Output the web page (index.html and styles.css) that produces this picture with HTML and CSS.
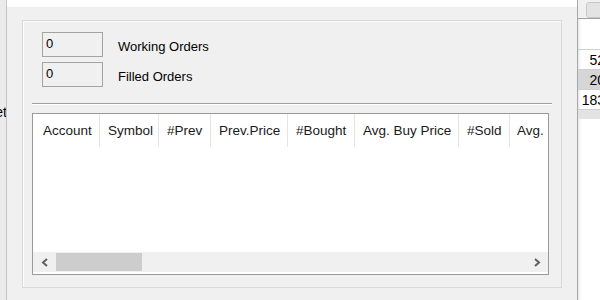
FILE: index.html
```html
<!DOCTYPE html>
<html>
<head>
    <title>Orders</title>
    <link rel="stylesheet" href="styles.css">
</head>
<body>

<div class="screen">
    <!-- window behind the dialog, left side -->
    <div class="behind-left">
        <span class="cut-text">Set</span>
    </div>

    <div class="dialog">
        <div class="titlebar"></div>
        <div class="dialog-body">
            <div class="panel">
                <div class="counters">
                    <div class="counter">
                        <div class="count-box">0</div>
                        <span class="count-label">Working Orders</span>
                    </div>
                    <div class="counter">
                        <div class="count-box">0</div>
                        <span class="count-label">Filled Orders</span>
                    </div>
                </div>

                <div class="separator"></div>

                <div class="listview">
                    <div class="list-header">
                        <div class="col col-account">Account</div>
                        <div class="col col-symbol">Symbol</div>
                        <div class="col col-prev">#Prev</div>
                        <div class="col col-prevprice">Prev.Price</div>
                        <div class="col col-bought">#Bought</div>
                        <div class="col col-buyprice">Avg. Buy Price</div>
                        <div class="col col-sold">#Sold</div>
                        <div class="col col-sellprice">Avg. Sell Price</div>
                    </div>
                    <div class="list-body">
                        <!-- no orders yet -->
                    </div>
                    <div class="hscroll">
                        <div class="scroll-btn">
                            <svg width="8" height="9" viewBox="0 0 8 9"><path d="M6 1 L2 4.5 L6 8" fill="none" stroke="#606060" stroke-width="2"/></svg>
                        </div>
                        <div class="scroll-track">
                            <div class="scroll-thumb"></div>
                        </div>
                        <div class="scroll-btn">
                            <svg width="8" height="9" viewBox="0 0 8 9"><path d="M2 1 L6 4.5 L2 8" fill="none" stroke="#606060" stroke-width="2"/></svg>
                        </div>
                    </div>
                    <div class="list-foot"></div>
                </div>
            </div>
        </div>
    </div>

    <!-- window behind the dialog, right side -->
    <div class="behind-right">
        <div class="bg-toolbar"><div class="bg-button"></div></div>
        <div class="bg-gap"></div>
        <div class="bg-row">52</div>
        <div class="bg-row selected">20</div>
        <div class="bg-row">183</div>
        <div class="bg-band"></div>
    </div>
</div>

</body>
</html>
```

FILE: styles.css
```css
body {
    margin: 0;
    background-color: #ffffff;
    font-family: 'Liberation Sans', Arial, sans-serif;
    overflow: hidden;
}
.screen {
    display: flex;
    width: 600px;
    height: 300px;
    overflow: hidden;
}

/* background window, left */
.behind-left {
    width: 7px;
    flex: none;
    background-color: #ebebeb;
    border-right: 1px solid #c4c4c4;
    display: flex;
    justify-content: flex-end;
    overflow: hidden;
    padding-top: 104px;
    box-sizing: border-box;
    height: 300px;
}
.cut-text {
    font-size: 14px;
    color: #000;
    line-height: 16px;
    margin-right: -1px;
}

/* dialog */
.dialog {
    width: 570px;
    flex: none;
    display: flex;
    flex-direction: column;
    border-right: 1px solid #a8a8a8;
    background-color: #f0f0f0;
}
.titlebar {
    height: 7px;
    background-color: #ffffff;
}
.dialog-body {
    padding: 13px 14px 0 15px;
}
.panel {
    width: 540px;
    height: 268px;
    box-sizing: border-box;
    border: 1px solid #d9d9d9;
    box-shadow: inset 1px 1px 0 #fbfbfb;
}

.counters {
    display: flex;
    flex-direction: column;
    gap: 5px;
    padding: 11px 0 0 19px;
}
.counter {
    display: flex;
    align-items: center;
    gap: 15px;
}
.count-box {
    width: 61px;
    height: 25px;
    box-sizing: border-box;
    border: 1px solid #a3a3a3;
    background-color: #f0f0f0;
    font-size: 13px;
    line-height: 21px;
    padding-left: 3px;
    color: #000;
}
.count-label {
    font-size: 13px;
    color: #000;
    padding-top: 3px;
}

.separator {
    margin: 16px 9px 0 9px;
    height: 1px;
    background-color: #a0a0a0;
    border-bottom: 1px solid #ffffff;
}

/* list */
.listview {
    margin: 8px 12px 0 9px;
    height: 162px;
    box-sizing: border-box;
    border: 1px solid #9a9a9a;
    background-color: #ffffff;
    display: flex;
    flex-direction: column;
    overflow: hidden;
}
.list-header {
    display: flex;
    height: 33px;
    flex: none;
    white-space: nowrap;
}
.col {
    flex: none;
    box-sizing: border-box;
    border-right: 1px solid #e5e5e5;
    font-size: 13.5px;
    color: #1a1a1a;
    line-height: 33px;
    padding-left: 8px;
    overflow: hidden;
}
.col-account { width: 67px; padding-left: 10px; }
.col-symbol { width: 59px; }
.col-prev { width: 52px; }
.col-prevprice { width: 77px; }
.col-bought { width: 67px; }
.col-buyprice { width: 104px; }
.col-sold { width: 51px; }
.col-sellprice { width: 110px; padding-left: 7px; }

.list-body {
    flex: 1;
}
.hscroll {
    display: flex;
    height: 20px;
    flex: none;
    background-color: #f0f0f0;
}
.scroll-btn {
    width: 23px;
    flex: none;
    display: flex;
    align-items: center;
    justify-content: center;
}
.scroll-track {
    flex: 1;
    display: flex;
    align-items: center;
}
.scroll-thumb {
    width: 86px;
    height: 18px;
    background-color: #cdcdcd;
}
.list-foot {
    height: 2px;
    flex: none;
}

/* background window, right */
.behind-right {
    width: 22px;
    flex: none;
    overflow: hidden;
    background-color: #ffffff;
    box-shadow: inset 3px 0 3px -2px rgba(0, 0, 0, 0.12);
}
.bg-toolbar {
    height: 19px;
    background-color: #f0f0f0;
    border-bottom: 1px solid #a0a0a0;
    padding: 2px 0 0 8px;
    box-sizing: border-box;
}
.bg-button {
    width: 30px;
    height: 14px;
    background-color: #e3e3e3;
    border: 1px solid #c8c8c8;
    border-radius: 3px;
}
.bg-gap {
    height: 30px;
    border-bottom: 1px solid #d0d0d0;
}
.bg-row {
    width: 27px;
    height: 20px;
    box-sizing: border-box;
    border-bottom: 1px solid #d0d0d0;
    font-size: 14px;
    line-height: 20px;
    text-align: right;
    color: #000;
}
.bg-row.selected {
    background-color: #d6d6d6;
}
.bg-band {
    height: 9px;
    background-color: #e3e3e3;
}
```
